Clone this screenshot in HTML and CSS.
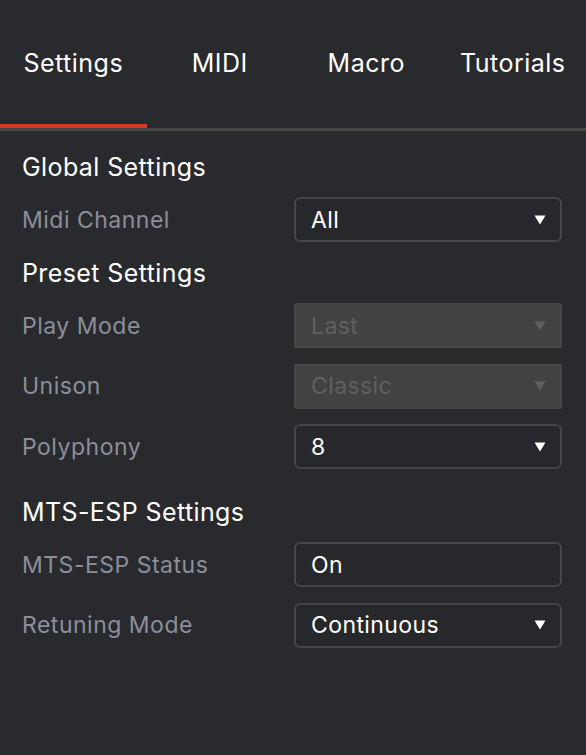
FILE: index.html
```html
<!DOCTYPE html>
<html lang="en">
<head>
<meta charset="utf-8">
<title>Settings</title>
<link rel="stylesheet" href="styles.css">
</head>
<body>
<div class="panel">
  <nav class="tabs">
    <div class="tab active">Settings</div>
    <div class="tab">MIDI</div>
    <div class="tab">Macro</div>
    <div class="tab">Tutorials</div>
  </nav>
  <main class="content">
    <h2 class="heading first">Global Settings</h2>
    <div class="row">
      <span class="label">Midi Channel</span>
      <div class="field">
        <span class="value">All</span>
        <svg class="caret" viewBox="0 0 12 10" width="12" height="10"><polygon points="0.5,0.5 11.5,0.5 6,9.5"/></svg>
      </div>
    </div>

    <h2 class="heading">Preset Settings</h2>
    <div class="row">
      <span class="label">Play Mode</span>
      <div class="field disabled">
        <span class="value">Last</span>
        <svg class="caret" viewBox="0 0 12 10" width="12" height="10"><polygon points="0.5,0.5 11.5,0.5 6,9.5"/></svg>
      </div>
    </div>
    <div class="row">
      <span class="label">Unison</span>
      <div class="field disabled">
        <span class="value">Classic</span>
        <svg class="caret" viewBox="0 0 12 10" width="12" height="10"><polygon points="0.5,0.5 11.5,0.5 6,9.5"/></svg>
      </div>
    </div>
    <div class="row">
      <span class="label">Polyphony</span>
      <div class="field">
        <span class="value">8</span>
        <svg class="caret" viewBox="0 0 12 10" width="12" height="10"><polygon points="0.5,0.5 11.5,0.5 6,9.5"/></svg>
      </div>
    </div>

    <h2 class="heading mts">MTS-ESP Settings</h2>
    <div class="row">
      <span class="label">MTS-ESP Status</span>
      <div class="field">
        <span class="value">On</span>
      </div>
    </div>
    <div class="row">
      <span class="label">Retuning Mode</span>
      <div class="field">
        <span class="value">Continuous</span>
        <svg class="caret" viewBox="0 0 12 10" width="12" height="10"><polygon points="0.5,0.5 11.5,0.5 6,9.5"/></svg>
      </div>
    </div>
  </main>
</div>
</body>
</html>
```

FILE: styles.css
```css
html, body {
  margin: 0;
  padding: 0;
  background: #292a2e;
}

body {
  font-family: Inter, "Noto Sans", sans-serif;
  color: #ffffff;
  width: 586px;
  height: 755px;
  overflow: hidden;
}

.tabs {
  display: grid;
  grid-template-columns: repeat(4, 1fr);
  height: 131px;
  box-sizing: border-box;
  border-bottom: 3px solid #474747;
}

.tab {
  display: flex;
  align-items: center;
  justify-content: center;
  font-size: 25px;
  letter-spacing: 0.5px;
  color: #ffffff;
  padding-top: 2px;
  box-sizing: border-box;
  border-bottom: 4px solid transparent;
}

.tab.active {
  border-bottom-color: #d9352a;
}

.content {
  padding: 0 24px 0 22px;
}

.heading {
  margin: 16px 0 15px;
  height: 30px;
  line-height: 30px;
  font-size: 25px;
  letter-spacing: 0.4px;
  font-weight: 400;
  color: #ffffff;
}

.heading.first {
  margin-top: 21px;
}

.heading.mts {
  margin-top: 28px;
}

.row {
  display: flex;
  align-items: center;
  justify-content: space-between;
  height: 45px;
  margin-bottom: 15.5px;
}

.label {
  font-size: 23px;
  letter-spacing: 0.5px;
  color: #8b8f99;
}

.field {
  width: 268px;
  height: 45px;
  box-sizing: border-box;
  border: 2px solid #45464b;
  border-radius: 6px;
  background: #27282c;
  display: flex;
  align-items: center;
  justify-content: space-between;
  padding: 0 14px 0 15px;
}

.value {
  font-size: 23px;
  letter-spacing: 0.4px;
  color: #ffffff;
}

.caret {
  display: block;
  fill: #ffffff;
}

.field.disabled {
  background: #424242;
  border-color: #474747;
  border-radius: 3px;
}

.field.disabled .value {
  color: #606060;
}

.field.disabled .caret {
  fill: #606060;
}
```
